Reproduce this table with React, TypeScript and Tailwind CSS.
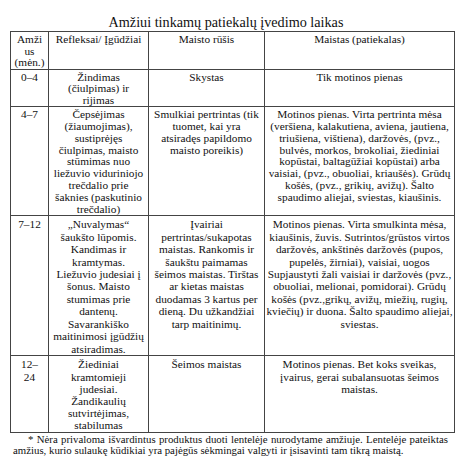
import React from "react";

type Row = { age: string[]; skills: string[]; type: string[]; food: string[]; h: string; lead: string };

const rows: Row[] = [
  {
    age: ["0–4"],
    skills: ["Žindimas", "(čiulpimas) ir", "rijimas"],
    type: ["Skystas"],
    food: ["Tik motinos pienas"],
    h: "h-[36px]",
    lead: "leading-[11.6px]",
  },
  {
    age: ["4–7"],
    skills: [
      "Čepsėjimas",
      "(žiaumojimas),",
      "sustiprėjęs",
      "čiulpimas, maisto",
      "stūmimas nuo",
      "liežuvio viduriniojo",
      "trečdalio prie",
      "šaknies (paskutinio",
      "trečdalio)",
    ],
    type: ["Smulkiai pertrintas (tik", "tuomet, kai yra", "atsiradęs papildomo", "maisto poreikis)"],
    food: [
      "Motinos pienas. Virta pertrinta mėsa",
      "(veršiena, kalakutiena, aviena, jautiena,",
      "triušiena, vištiena), daržovės, (pvz.,",
      "bulvės, morkos, brokoliai, žiediniai",
      "kopūstai, baltagūžiai kopūstai) arba",
      "vaisiai, (pvz., obuoliai, kriaušės). Grūdų",
      "košės, (pvz., grikių, avižų). Šalto",
      "spaudimo aliejai, sviestas, kiaušinis.",
    ],
    h: "h-[107px]",
    lead: "leading-[11.8px]",
  },
  {
    age: ["7–12"],
    skills: [
      "„Nuvalymas“",
      "šaukšto lūpomis.",
      "Kandimas ir",
      "kramtymas.",
      "Liežuvio judesiai į",
      "šonus. Maisto",
      "stumimas prie",
      "dantenų.",
      "Savarankiško",
      "maitinimosi įgūdžių",
      "atsiradimas.",
    ],
    type: [
      "Įvairiai",
      "pertrintas/sukapotas",
      "maistas. Rankomis ir",
      "šaukštu paimamas",
      "šeimos maistas. Tirštas",
      "ar kietas maistas",
      "duodamas 3 kartus per",
      "dieną. Du užkandžiai",
      "tarp maitinimų.",
    ],
    food: [
      "Motinos pienas. Virta smulkinta mėsa,",
      "kiaušinis, žuvis. Sutrintos/grūstos virtos",
      "daržovės, ankštinės daržovės (pupos,",
      "pupelės, žirniai), vaisiai, uogos",
      "Supjaustyti žali vaisiai ir daržovės (pvz.,",
      "obuoliai, melionai, pomidorai). Grūdų",
      "košės (pvz.,grikų, avižų, miežių, rugių,",
      "kviečių) ir duona. Šalto spaudimo aliejai,",
      "sviestas.",
    ],
    h: "h-[140px]",
    lead: "leading-[12.4px]",
  },
  {
    age: ["12–", "24"],
    skills: ["Žiediniai", "kramtomieji", "judesiai.", "Žandikaulių", "sutvirtėjimas,", "stabilumas"],
    type: ["Šeimos maistas"],
    food: ["Motinos pienas. Bet koks sveikas,", "įvairus, gerai subalansuotas šeimos", "maistas."],
    h: "h-[73px]",
    lead: "leading-[12.2px]",
  },
];

const serif = "font-['Liberation_Serif','Times_New_Roman',serif]";
const cell = `border border-[#444] font-normal align-top ${serif} text-[11.3px] whitespace-nowrap overflow-hidden px-0`;

function Lines({ lines }: { lines: string[] }) {
  return (
    <>
      {lines.map((l, i) => (
        <div key={i}>{l}</div>
      ))}
    </>
  );
}

export default function App() {
  return (
    <div className={`w-[474px] h-[460px] bg-white text-[#111] overflow-hidden ${serif}`}>
      <div className="pl-[10px] pr-[20px]">
        <div className={`pt-[14px] text-center text-[14.2px] leading-[17px] pr-[12px] ${serif}`}>
          Amžiui tinkamų patiekalų įvedimo laikas
        </div>
        <table className={`w-[444px] border-collapse table-fixed text-center ${serif}`}>
          <colgroup>
            <col className="w-[38px]" />
            <col className="w-[100px]" />
            <col className="w-[116px]" />
            <col className="w-[190px]" />
          </colgroup>
          <thead>
            <tr className="h-[36px]">
              <th className={`${cell} leading-[11.5px] pt-[2px]`}>
                <Lines lines={["Amži", "us", "(mėn.)"]} />
              </th>
              <th className={`${cell} leading-[11.5px] pt-[2px]`}>Refleksai/ Įgūdžiai</th>
              <th className={`${cell} leading-[11.5px] pt-[2px]`}>Maisto rūšis</th>
              <th className={`${cell} leading-[11.5px] pt-[2px]`}>Maistas (patiekalas)</th>
            </tr>
          </thead>
          <tbody>
            {rows.map((r, i) => (
              <tr key={i} className={r.h}>
                <td className={`${cell} ${r.lead} pt-[2px]`}>
                  <Lines lines={r.age} />
                </td>
                <td className={`${cell} ${r.lead} pt-[2px]`}>
                  <Lines lines={r.skills} />
                </td>
                <td className={`${cell} ${r.lead} pt-[2px]`}>
                  <Lines lines={r.type} />
                </td>
                <td className={`${cell} ${r.lead} pt-[2px]`}>
                  <Lines lines={r.food} />
                </td>
              </tr>
            ))}
          </tbody>
        </table>
        <div
          className={`ml-[3px] w-[435px] text-justify indent-[15px] text-[10.8px] leading-[11.5px] pt-[1px] ${serif}`}
        >
          * Nėra privaloma išvardintus produktus duoti lentelėje nurodytame amžiuje. Lentelėje pateiktas
          amžius, kurio sulaukę kūdikiai yra pajėgūs sėkmingai valgyti ir įsisavinti tam tikrą maistą.
        </div>
      </div>
    </div>
  );
}
